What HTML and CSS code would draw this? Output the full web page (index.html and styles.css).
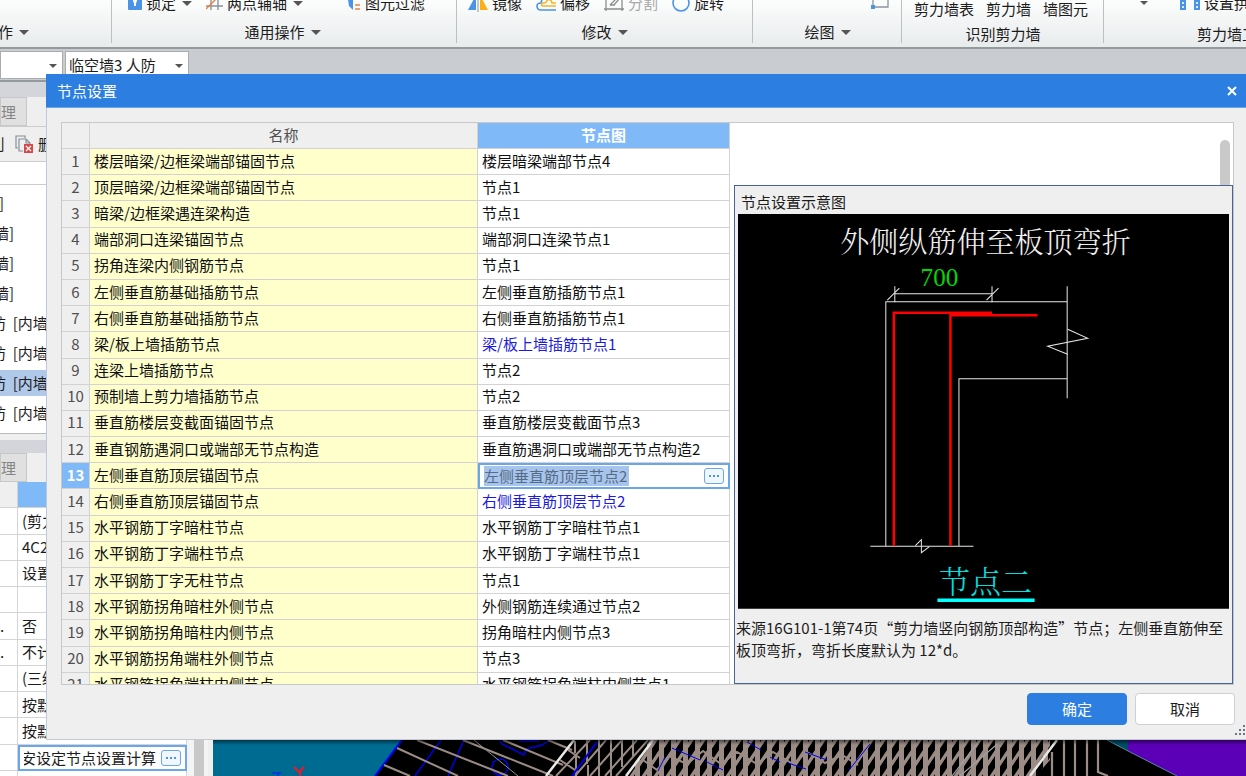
FILE: index.html
```html
<!DOCTYPE html>
<html lang="zh-CN">
<head>
<meta charset="utf-8">
<title>节点设置</title>
<link rel="stylesheet" href="styles.css">
</head>
<body>
<div class="app">
  <header class="ribbon">
    <section class="group group-a">
      <button class="group-label">作<i class="caret"></i></button>
    </section>
    <section class="group group-b">
      <div class="tools">
        <button class="tool"><svg width="14" height="20" viewBox="0 0 14 20"><rect y="2" width="14" height="15" rx="1" fill="#4a93e6"/><circle cx="7" cy="8" r="2" fill="#fff"/><path d="M6 9h2v4H6z" fill="#fff"/></svg>锁定<i class="caret"></i></button>
        <button class="tool"><svg width="17" height="20" viewBox="0 0 17 20" fill="none" stroke="#8a949e" stroke-width="1.4"><path d="M5 4v13M0 13h17M12 4v13"/><path d="M0 16L14 2" stroke="#f08040"/></svg>两点辅轴<i class="caret"></i></button>
        <button class="tool tool-filter"><svg width="14" height="20" viewBox="0 0 14 20"><path d="M0 0h6v17L2 13z" fill="#4a93e6"/><path d="M8 12h5M8 16h5" stroke="#f08040" stroke-width="1.5"/></svg>图元过滤</button>
      </div>
      <button class="group-label">通用操作<i class="caret"></i></button>
    </section>
    <section class="group group-c">
      <div class="tools">
        <button class="tool"><svg width="20" height="20" viewBox="0 0 20 20"><path d="M8 2v15H0z" fill="#4a93e6"/><path d="M12 2v15h8z" fill="#fbb018"/><path d="M10 0v19" stroke="#8a949e"/></svg>镜像</button>
        <button class="tool"><svg width="20" height="20" viewBox="0 0 20 20" fill="none" stroke-width="1.6"><path d="M20 17H5q-4 0-4-4 0-3 4-3 1-6 6-7" stroke="#4a93e6"/><path d="M20 13H7q-3-1 0-3 4 0 4-3 4-2 5 3h4" stroke="#f5b52a"/></svg>偏移</button>
        <button class="tool tool-off"><svg width="20" height="20" viewBox="0 0 20 20" fill="none" stroke="#8c8c8c" stroke-width="1.3"><path d="M2 1v17M18 1v17M0 16h20M6 12L14 4M10 12l5-6M6 12h5"/></svg>分割</button>
        <button class="tool"><svg width="18" height="20" viewBox="0 0 18 20" fill="none" stroke="#4a93e6" stroke-width="1.6"><circle cx="9" cy="10" r="8"/></svg>旋转</button>
      </div>
      <button class="group-label">修改<i class="caret"></i></button>
    </section>
    <section class="group group-d">
      <div class="tools tools-right"><svg width="20" height="20" viewBox="0 0 20 20" fill="none"><path d="M3 2v12h15V2" stroke="#8a949e" stroke-width="1.3"/><path d="M1 12h4v4H1z" fill="#4a93e6"/></svg></div>
      <button class="group-label">绘图<i class="caret"></i></button>
    </section>
    <section class="group group-e">
      <div class="tools"><button class="tool">剪力墙表</button><button class="tool">剪力墙</button><button class="tool">墙图元</button></div>
      <button class="group-label">识别剪力墙</button>
    </section>
    <section class="group group-f">
      <div class="tools">
        <button class="tool tool-more" aria-label="更多"><i class="caret caret-small"></i></button>
        <button class="tool"><svg width="20" height="20" viewBox="0 0 20 20"><path d="M0 0h6v17H0zM14 0h6v17h-6z" fill="#4a93e6"/><path d="M3 1v15M17 1v15" stroke="#d8ebff" stroke-width="2" stroke-dasharray="2 2"/></svg>设置拱墙</button>
      </div>
      <button class="group-label">剪力墙工具</button>
    </section>
  </header>

  <div class="selectors">
    <span class="pick pick-type"><select aria-label="类别"><option></option></select></span>
    <span class="pick pick-item"><select aria-label="构件"><option>临空墙3 人防</option></select></span>
  </div>

  <div class="workspace">
    <aside class="side">
      <div class="tabs"><button class="tab">理</button></div>
      <div class="side-tools"><button class="tool">刂</button>
        <button class="tool tool-delete"><svg width="18" height="18" viewBox="0 0 18 18" fill="none" stroke="#84909a" stroke-width="1.2"><path d="M3 13H1V1h9v2M8 16H4V4h7l4 4v2M11 4v4h4"/><path d="M9 9h9v9H9z" fill="#d9474b" stroke="none"/><path d="M11 11l5 5m0-5l-5 5" stroke="#fff"/></svg>删除</button>
      </div>
      <input class="search" aria-label="搜索">
      <ul class="items">
        <li class="cut-1">]</li>
        <li class="cut-2">墙]</li>
        <li class="cut-2">墙]</li>
        <li class="cut-2">墙]</li>
        <li class="cut-3">防  [内墙]</li>
        <li class="cut-3">防  [内墙]</li>
        <li class="cut-3 current">防  [内墙]</li>
        <li class="cut-3">防  [内墙]</li>
      </ul>
      <div class="tabs tabs-low"><button class="tab">理</button></div>
      <div class="props">
        <table class="prop-table">
          <tr><th></th><th class="hot"></th></tr>
          <tr><td></td><td>(剪力墙)</td></tr>
          <tr><td></td><td>4C25</td></tr>
          <tr><td></td><td>设置</td></tr>
          <tr><td></td><td></td></tr>
          <tr><td>.</td><td>否</td></tr>
          <tr><td>.</td><td>不计算</td></tr>
          <tr><td></td><td>(三级)</td></tr>
          <tr><td></td><td>按默认</td></tr>
          <tr><td></td><td>按默认</td></tr>
          <tr><td></td><td class="editing"><div class="edit"><input class="edit-prop" aria-label="节点设置" value="安设定节点设置计算"><button class="more" aria-label="浏览"><i></i><i></i><i></i></button></div></td></tr>
          <tr><td></td><td></td></tr>
        </table>
        <div class="side-scroll"></div>
      </div>
    </aside>
    <main class="viewport">
      <svg class="model" width="1033" height="36" viewBox="213 740 1033 36">
        <defs>
          <pattern id="mesh" width="12" height="36" patternUnits="userSpaceOnUse" x="827" y="740">
            <path d="M2.500 0v36" stroke="#9c8c86" stroke-width="5"/>
            <path d="M-2 16L14-8M-2 34L14 10M-2 52L14 28" stroke="#9c8c86" stroke-width="3.400"/>
          </pattern>
          <linearGradient id="shade" x2="0" y2="1"><stop stop-color="#000" stop-opacity=".5"/><stop offset="1" stop-color="#000" stop-opacity="0"/></linearGradient>
        </defs>
        <path d="M402 740H1107L1180 776H375z" fill="#000"/>
        <path d="M1107 740h21v11z" fill="#004c66"/>
        <path d="M1128 740h118v36h-69l-49-25z" fill="#5c00b8"/>
        <path d="M1107 740l21 11 49 25" fill="none" stroke="#4f8aa0"/>
        <path d="M402 740L375 776" stroke="#0000ff" stroke-width="2"/>
        <g fill="none" stroke="#0000f0" stroke-width="1.400"><path d="M441 740L415 776M464 740L448 776M500 740l2 4 22 11 2-6 16-4 8-5M519 741h20"/><circle cx="500" cy="767" r="8"/></g>
        <path d="M397 748l61 28M384 765l26 11M417 740l91 36M463 740l90 36M503 740l60 25M548 740l24 10" stroke="#9c8c86" stroke-width="2"/>
        <path d="M474 740l44 36" stroke="#8c9090"/>
        <path d="M575 741v12M587 740v24M599 740v36M611 740v36M622 740v27M633 740v16M576 754v22M588 765v11" stroke="#9c8c86" stroke-width="2"/>
        <path d="M590 740l-34 36M606 740l-31 36M622 740l-32 36M637 740l-32 36M648 740l-32 36M560 760l18 12M568 750l12 8" stroke="#9c8c86" stroke-width="2"/>
        <path d="M597 742l-25 34" stroke="#0000e0" stroke-width="2"/>
        <path d="M650 740H1050v20l-14 16H626z" fill="url(#mesh)"/>
        <path d="M643 760l14 10 12-14 18 8 16-13 18 13 16-12 20 12 16-12 20 12 14-12 18 11 17-8 16 10" fill="none" stroke="#9c8c86" stroke-width="2"/>
        <path d="M672 748l28 12M705 761l18 9M665 757l-7 14M747 742l14 8M770 757l10 5M788 763l18 6M805 752l22 8M870 744l-21 26" stroke="#0000f0" stroke-width="1"/>
        <path d="M574 740L546 776M653 740L626 776M1057 740L1030 776" stroke="#e8e8e6" stroke-width="2.500"/>
        <path d="M1002 740l-42 36M980 740l-28 36" stroke="#a0a4a2" stroke-width="1.200"/>
        <path d="M1052 752v24M1064 740v36M1075 740v36M1087 740v36M1098 740v32l10 4" fill="none" stroke="#9c8c86" stroke-width="2.200"/>
        <path d="M294 767l6 6v3M304 767l-5 6" stroke="#f01828" stroke-width="2" fill="none"/>
        <path d="M272 773h8l-3 3" stroke="#0030f0" stroke-width="1.500" fill="none"/>
        <path d="M213 740h1033v5H213z" fill="url(#shade)"/>
      </svg>
    </main>
  </div>
</div>

<div class="dialog" role="dialog" aria-labelledby="dialog-title">
  <div class="title-bar">
    <h1 id="dialog-title">节点设置</h1>
    <button class="close" aria-label="关闭"><svg width="12" height="12" viewBox="0 0 12 12" stroke="#fff" stroke-width="2"><path d="M2 2l8 8M10 2l-8 8"/></svg></button>
  </div>
  <div class="frame">
    <table class="nodes">
      <colgroup><col class="col-no"><col class="col-name"><col class="col-node"></colgroup>
      <thead><tr><th></th><th>名称</th><th class="hot">节点图</th></tr></thead>
      <tbody>
        <tr><th>1</th><td>楼层暗梁/边框梁端部锚固节点</td><td>楼层暗梁端部节点4</td></tr>
        <tr><th>2</th><td>顶层暗梁/边框梁端部锚固节点</td><td>节点1</td></tr>
        <tr><th>3</th><td>暗梁/边框梁遇连梁构造</td><td>节点1</td></tr>
        <tr><th>4</th><td>端部洞口连梁锚固节点</td><td>端部洞口连梁节点1</td></tr>
        <tr><th>5</th><td>拐角连梁内侧钢筋节点</td><td>节点1</td></tr>
        <tr><th>6</th><td>左侧垂直筋基础插筋节点</td><td>左侧垂直筋插筋节点1</td></tr>
        <tr><th>7</th><td>右侧垂直筋基础插筋节点</td><td>右侧垂直筋插筋节点1</td></tr>
        <tr><th>8</th><td>梁/板上墙插筋节点</td><td class="changed">梁/板上墙插筋节点1</td></tr>
        <tr><th>9</th><td>连梁上墙插筋节点</td><td>节点2</td></tr>
        <tr><th>10</th><td>预制墙上剪力墙插筋节点</td><td>节点2</td></tr>
        <tr><th>11</th><td>垂直筋楼层变截面锚固节点</td><td>垂直筋楼层变截面节点3</td></tr>
        <tr><th>12</th><td>垂直钢筋遇洞口或端部无节点构造</td><td>垂直筋遇洞口或端部无节点构造2</td></tr>
        <tr><th class="hot">13</th><td>左侧垂直筋顶层锚固节点</td><td class="editing"><div class="edit"><input class="edit-node" aria-label="节点图" value="左侧垂直筋顶层节点2"><button class="more" aria-label="选择节点"><i></i><i></i><i></i></button></div></td></tr>
        <tr><th>14</th><td>右侧垂直筋顶层锚固节点</td><td class="changed">右侧垂直筋顶层节点2</td></tr>
        <tr><th>15</th><td>水平钢筋丁字暗柱节点</td><td>水平钢筋丁字暗柱节点1</td></tr>
        <tr><th>16</th><td>水平钢筋丁字端柱节点</td><td>水平钢筋丁字端柱节点1</td></tr>
        <tr><th>17</th><td>水平钢筋丁字无柱节点</td><td>节点1</td></tr>
        <tr><th>18</th><td>水平钢筋拐角暗柱外侧节点</td><td>外侧钢筋连续通过节点2</td></tr>
        <tr><th>19</th><td>水平钢筋拐角暗柱内侧节点</td><td>拐角暗柱内侧节点3</td></tr>
        <tr><th>20</th><td>水平钢筋拐角端柱外侧节点</td><td>节点3</td></tr>
        <tr><th>21</th><td>水平钢筋拐角端柱内侧节点</td><td>水平钢筋拐角端柱内侧节点1</td></tr>
      </tbody>
    </table>
    <div class="right">
      <div class="blank"><div class="thumb"></div></div>
      <section class="preview">
        <h2>节点设置示意图</h2>
        <svg class="drawing" viewBox="738 214 490 394" fill="none">
          <path d="M738 214h490v394H738z" fill="#000"/>
          <text class="cad-title" x="985" y="253" text-anchor="middle">外侧纵筋伸至板顶弯折</text>
          <text class="cad-size" x="939" y="286" text-anchor="middle">700</text>
          <g stroke="#e6e6e6" stroke-width="1">
            <path d="M894.500 286v16M991.500 286v16M894 293.500h98M887 300l12-12M986 300l12-12"/>
            <path d="M885.500 545V301.500h181M1066.500 286v112M1066 378.500H958.500V545M870 545.500h103"/>
            <path d="M1067 329l20 9-40 8 20 8M915 545l6-6v13l8-6"/>
          </g>
          <path d="M893.500 545V312.500h98M950 545V315h87" stroke="#f00" stroke-width="2.500"/>
          <text class="cad-name" x="985" y="592" text-anchor="middle">节点二</text>
          <path d="M937 599.500h97" stroke="#0ff" stroke-width="3.500"/>
        </svg>
        <p>来源16G101-1第74页“剪力墙竖向钢筋顶部构造”节点；左侧垂直筋伸至板顶弯折，弯折长度默认为 12*d。</p>
      </section>
    </div>
  </div>
  <footer class="actions">
    <button class="btn btn-primary">确定</button>
    <button class="btn">取消</button>
    <svg class="grip" width="12" height="12" viewBox="0 0 12 12" fill="#6f7482"><path d="M9 1h2v2H9zM5 5h2v2H5zM9 5h2v2H9zM1 9h2v2H1zM5 9h2v2H5zM9 9h2v2H9z"/></svg>
  </footer>
</div>
</body>
</html>
```
FILE: styles.css
```css
* { box-sizing: border-box; }
body {
  margin: 0;
  font: 15px/20px "Noto Sans CJK SC", sans-serif;
  color: #1c1c1c;
}
button, input, select { font: inherit; color: inherit; margin: 0; }
button { padding: 0; border: 0; background: none; white-space: nowrap; }
svg { flex: none; display: block; }

.app { display: flex; flex-direction: column; height: 100vh; overflow: hidden; background: #c9ccd0; }

/* Ribbon */
.ribbon {
  display: flex;
  flex: none;
  height: 49px;
  background: linear-gradient(#fcfdfd, #e8ebec);
  border-bottom: 2px solid #94999b;
  overflow: hidden;
}
.group {
  position: relative;
  display: flex;
  flex: none;
  flex-direction: column;
  justify-content: flex-end;
  padding-bottom: 5px;
}
.group:not(:last-child)::after {
  content: "";
  position: absolute;
  top: 0;
  right: 0;
  height: 43px;
  border-right: 1px solid #bdc0c2;
}
.group-a { width: 112px; align-items: flex-start; }
.group-a .group-label { text-indent: -2px; }
.group-b { width: 345px; padding-left: 16px; }
.group-c { width: 296px; padding-left: 11px; }
.group-d { width: 149px; }
.group-e { width: 202px; padding-bottom: 3px; }
.group-f { flex: 1; padding-bottom: 3px; padding-left: 34px; }
.tools { display: flex; height: 20px; margin-bottom: 9px; gap: 14px; }
.group-b .tool-filter { margin-left: 30px; }
.group-e .tools { padding-left: 12px; margin-bottom: 5px; gap: 12px; }
.group-f .tools { gap: 30px; margin-bottom: 11px; }
.tools-right { justify-content: flex-end; padding-right: 12px; }
.tool { display: flex; align-items: center; gap: 4px; }
.tool-off { color: #a8a8a8; }
.tool-more { width: 12px; justify-content: center; }
.group-label { display: flex; justify-content: center; align-items: center; gap: 6px; }
.group-b .group-label { padding-right: 20px; }
.group-c .group-label { padding-right: 12px; }
.group-f .group-label { justify-content: flex-start; padding-left: 59px; }
.caret {
  border: 5px solid transparent;
  border-top-color: #555;
  border-bottom: 0;
}
.tool .caret { margin-left: 2px; }
.tool .caret-small { margin-left: 0; border-width: 4px 4px 0; }

.selectors { display: flex; flex: none; gap: 2px; height: 31px; padding-top: 2px; background: #c9ccd0; }
.pick { position: relative; }
.pick::after {
  content: "";
  position: absolute;
  right: 6px;
  top: 13px;
  border: 4px solid transparent;
  border-top-color: #555;
  border-bottom: 0;
}
.pick select {
  appearance: none;
  width: 100%;
  height: 28px;
  padding: 0 3px;
  border: 1px solid #aaadb0;
  border-radius: 0;
  background: #fff;
}
.pick-type { width: 63px; }
.pick-item { width: 124px; }

/* Left panel */
.workspace { display: flex; flex: 1; min-height: 0; }
.side {
  display: flex;
  flex-direction: column;
  flex: none;
  width: 213px;
  background: #efefef;
  border-top: 2px solid #94999b;
  border-right: 5px solid #efefef;
}
.tabs { display: flex; flex: none; height: 44px; padding-top: 15px; background: linear-gradient(#d3d5da 15px, #efefef 15px); }
.tabs-low { height: 42px; margin-top: 6px; padding-top: 13px; background: linear-gradient(#d3d5da 13px, #efefef 13px); }
.tab { width: 27px; border: 1px solid #c8c8c8; background: #e0e0e0; color: #858585; text-align: left; }
.side-tools { display: flex; flex: none; gap: 12px; height: 35px; align-items: center; border-top: 1px solid #ccc; overflow: hidden; }
.side-tools .tool:first-child { text-indent: -10px; width: 3px; }
.tool-delete { gap: 5px; }
.search { flex: none; height: 24px; border: 1px solid #ccc; border-width: 1px 0; background: #fff; }
.items { flex: none; height: 249px; margin: 0; padding: 5px 0 0; list-style: none; background: #fff; border-bottom: 1px solid #bbb; overflow: hidden; }
.items li { height: 26px; margin-bottom: 4px; line-height: 26px; white-space: pre; }
.cut-1 { text-indent: -1px; }
.cut-2 { text-indent: -6px; }
.cut-3 { text-indent: -9px; }
.current { background: #b0c8ea; }
.props { display: flex; flex: none; align-items: stretch; gap: 7px; background: #f4f4f4; }
.prop-table { width: 187px; height: 315px; border-spacing: 0; table-layout: fixed; background: #fff; }
.prop-table th, .prop-table td { height: 26px; padding: 0 0 0 4px; border: 1px solid #d4d4d4; border-width: 0 1px 1px 0; white-space: nowrap; overflow: hidden; }
.prop-table th:first-child, .prop-table td:first-child { width: 18px; padding: 0; background: #efefef; }
.prop-table td:first-child { background: #fff; }
.side-scroll { width: 10px; background: #c8c8c8; }
.viewport { display: flex; flex: 1; min-width: 0; align-items: flex-end; background: #006b91; overflow: hidden; }
.model { flex: none; }

/* Dialog floating over the workspace */
.dialog {
  position: absolute;
  inset: 74px 0 36px 46px;
  display: flex;
  flex-direction: column;
  background: #efefef;
  border-left: 1px solid #bcc8dc;
  border-bottom: 1px solid #c5c9d0;
}
.title-bar {
  display: flex;
  flex: none;
  align-items: center;
  justify-content: space-between;
  height: 34px;
  margin-left: -1px;
  padding: 0 8px 0 11px;
  background: #2c7fe1;
  border-bottom: 1px solid #6aa6ee;
  color: #fff;
}
.title-bar h1 { margin: 0; font-size: 15px; font-weight: 400; }
.frame {
  display: flex;
  flex: 1;
  gap: 4px;
  min-height: 0;
  margin: 14px 12px 0 14px;
  border: 1px solid #c8c8c8;
  background: #fff;
  overflow: hidden;
}
.nodes { flex: none; width: 668px; height: 576px; border-spacing: 0; table-layout: fixed; }
.col-no { width: 28px; }
.col-name { width: 388px; }
.nodes th, .nodes td {
  height: 26px;
  padding: 0 4px 2px;
  border: 1px solid #d2d2d2;
  border-width: 0 1px 1px 0;
  text-align: left;
  font-weight: 400;
  white-space: nowrap;
  color: #101010;
}
.nodes th { padding: 0 0 2px; text-align: center; background: #efefef; color: #505050; }
.nodes td:nth-child(2) { background: #ffffcc; }
.nodes .hot, .prop-table .hot { background: #80b9f8; color: #fff; font-weight: 700; }
.nodes .changed { color: #1a1ae0; }
.nodes td.editing, .prop-table td.editing { padding: 0; border: 0; }
.edit { display: flex; justify-content: space-between; align-items: center; height: 26px; padding: 0 4px; border: 2px solid #6ba6ea; background: #fff; }
.edit input { padding: 0; border: 0; height: 20px; }
.edit-node { width: 145px; background: #a6c4ec; color: #566b86; }
.edit-prop { width: 135px; background: #fff; text-indent: -3px; }
.more { display: flex; flex: none; align-items: center; justify-content: center; gap: 2px; width: 20px; height: 16px; border: 1px solid #6ba6ea; border-radius: 3px; background: #f0f7ff; }
.more i { width: 2px; height: 2px; background: #4f93dc; }
.right { display: flex; flex: 1; flex-direction: column; min-width: 0; }
.blank { display: flex; flex: none; justify-content: flex-end; align-items: flex-end; height: 62px; padding-right: 3px; }
.thumb { width: 10px; height: 45px; border-radius: 5px 5px 0 0; background: #c9c9c9; }
.preview { flex: 1; padding: 0 3px; border: 1px solid #45649a; background: #efefef; }
.preview h2 { margin: 6px 3px 2px; font-size: 15px; font-weight: 400; line-height: 20px; }
.drawing { width: 100%; }
.cad-title { font-size: 29px; font-weight: 300; fill: #f0f0f0; font-family: "Noto Serif CJK SC", "Noto Sans CJK SC", serif; }
.cad-size { font-size: 25px; fill: #00d800; font-family: "Liberation Serif", serif; }
.cad-name { font-size: 31px; font-weight: 300; fill: #00e0e0; font-family: "Noto Serif CJK SC", "Noto Sans CJK SC", serif; }
.preview p { margin: 8px -2px 0; line-height: 22px; }
.actions { display: flex; flex: none; justify-content: flex-end; gap: 8px; height: 54px; padding: 8px 11px 0 0; }
.btn { width: 100px; height: 32px; border: 1px solid #d0d0d0; border-radius: 4px; background: #fff; }
.btn-primary { border-color: #2c7fe1; background: #2c7fe1; color: #fff; }
.grip { position: absolute; right: 0; bottom: 3px; }
```
